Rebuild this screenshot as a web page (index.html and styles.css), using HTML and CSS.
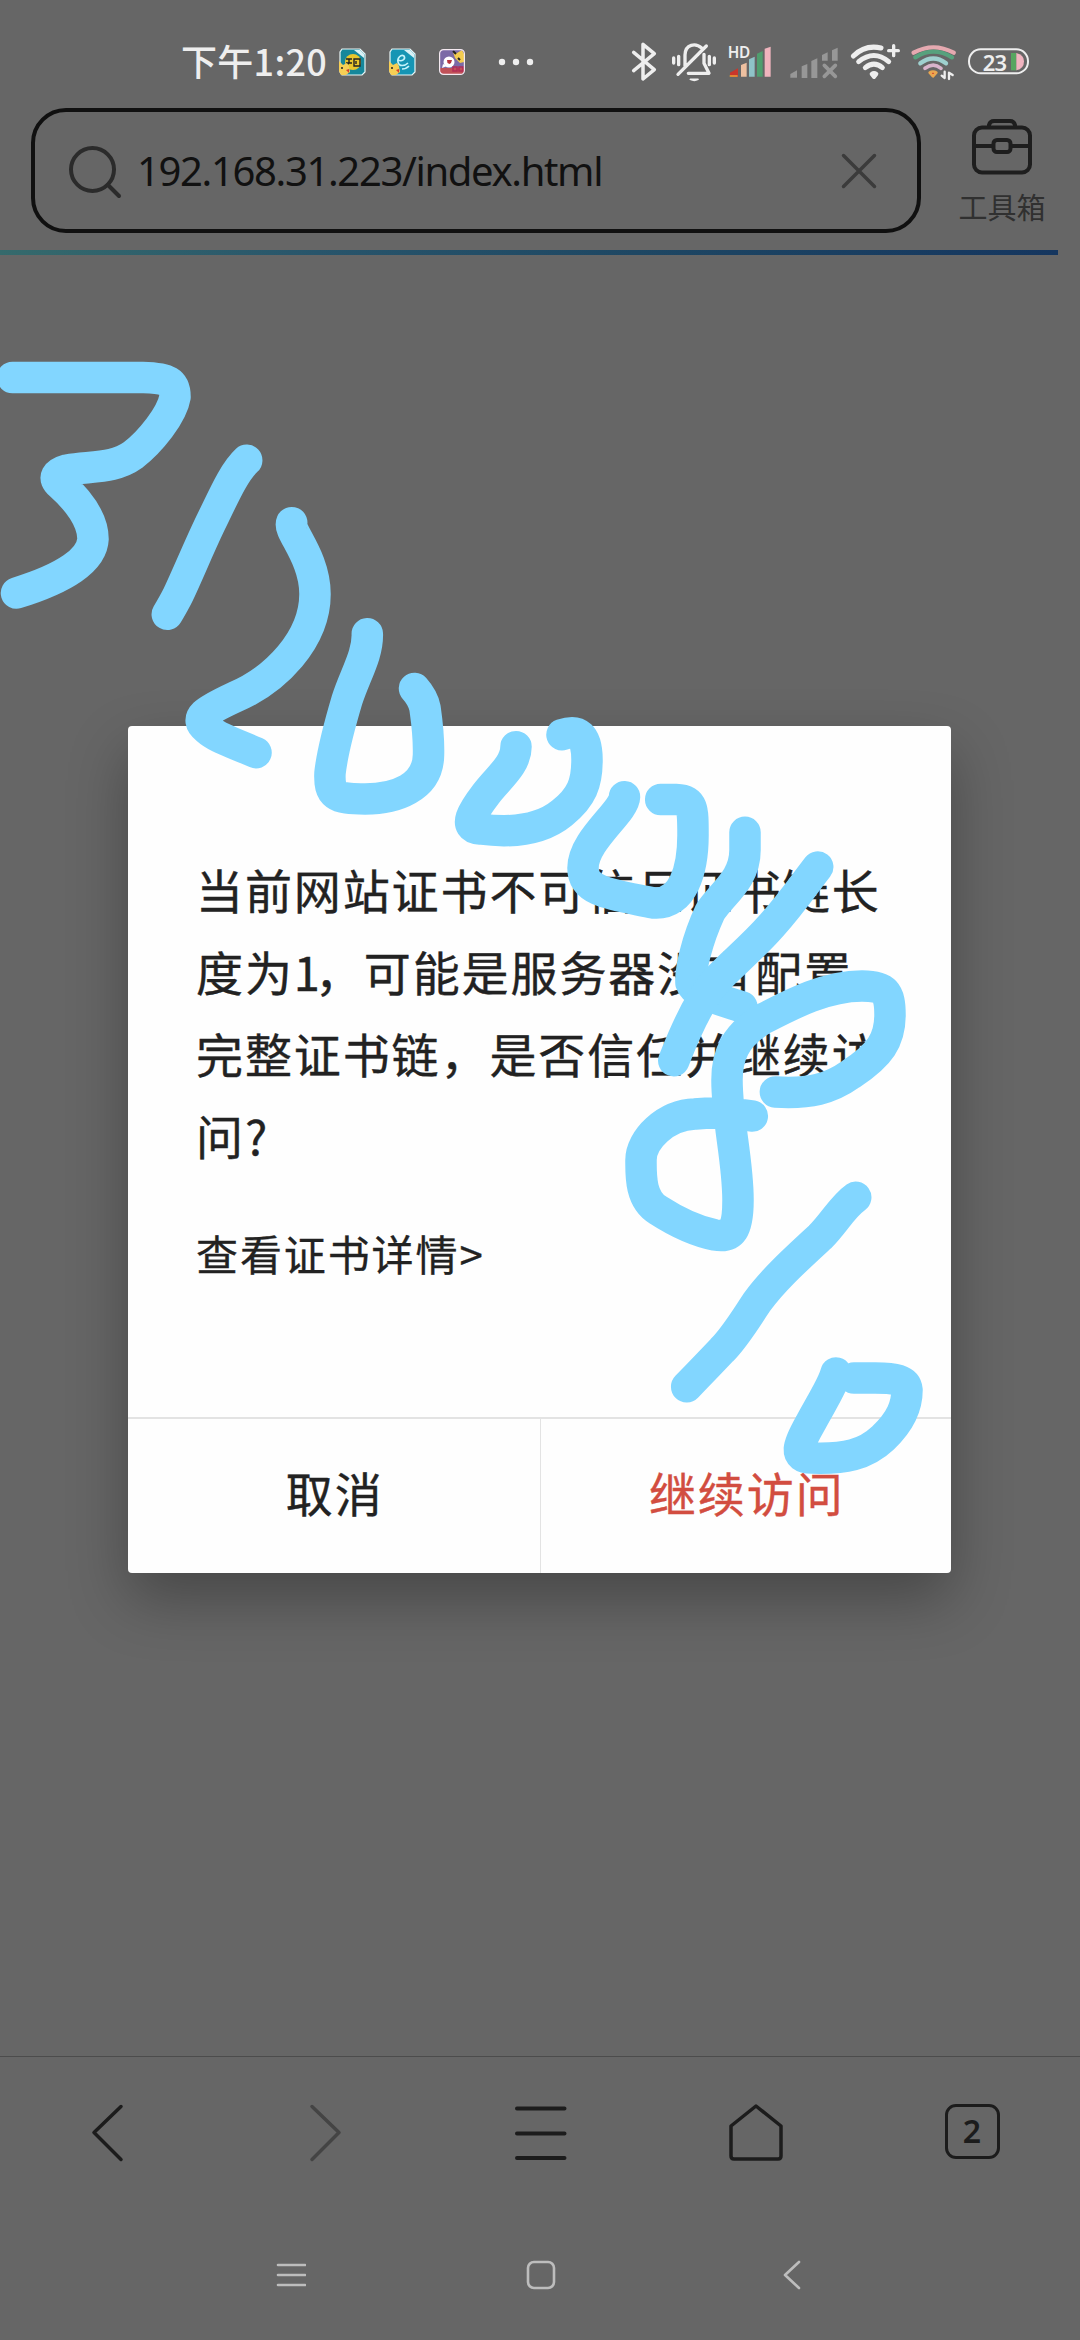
FILE: index.html
```html
<!DOCTYPE html>
<html lang="zh-CN">
<head>
<meta charset="utf-8">
<title>192.168.31.223/index.html</title>
<link rel="stylesheet" href="styles.css">
</head>
<body>
<div class="screen">
  <header class="status">
    <span class="clock">下午1:20</span>
    <div class="apps">
      <svg width="28" height="28" viewBox="0 0 28 28"><path d="M4 1H22L27 6V24L24 27H4L2 24V4Z" fill="#16879b" stroke="#e9f5f5" stroke-width="1.2"/><path d="M16 2H22L26 6V10Z" fill="#d9f1f6"/><circle cx="15" cy="14" r="8" fill="#e9c62c"/><path d="M8 11H14M8 15H14M11 11V15L8 18M16 11H22V18H16ZM18 13V16" stroke="#222" stroke-width="1.4" fill="none"/><path d="M1 13L5 17L9 15L11 18L12 24L8 27H3L1 23Z" fill="#f7cf55"/><path d="M8 22L11 21V25Z" fill="#d8402c"/><circle cx="4" cy="20" r="1" fill="#222"/></svg>
      <svg width="28" height="28" viewBox="0 0 28 28"><path d="M4 1H22L27 6V24L24 27H4L2 24V4Z" fill="#1695b4" stroke="#e9f5f5" stroke-width="1.2"/><path d="M16 2H22L26 6V10Z" fill="#d9f1f6"/><path d="M10 12C14 14 18 11 16 8C13 6 9 10 10 14C11 19 17 18 20 15M14 21Q18 21 21 18" stroke="#c5f4fb" stroke-width="1.6" fill="none"/><path d="M1 13L5 17L9 15L11 18L12 24L8 27H3L1 23Z" fill="#f7cf55"/><path d="M8 22L11 21V25Z" fill="#d8402c"/><circle cx="4" cy="20" r="1" fill="#222"/></svg>
      <svg width="28" height="28" viewBox="0 0 28 28"><rect x="1.6" y="1.6" width="24.8" height="24.8" rx="4" fill="#7b6aa6"/><path d="M2 20H26V24L24 26H4L2 24Z" fill="#c05158"/><circle cx="11" cy="14" r="5.5" fill="#fff"/><path d="M5 16L4 20L9 18Z" fill="#fff"/><path d="M9 12H14L13 15L11.5 16L9.5 15Z" fill="#b7333f"/><path d="M15 4L19 5L24 2L26 6V14L22 15L17 10Z" fill="#f3cc50"/><path d="M15 3L18 6M20 10L22 12" stroke="#222" stroke-width="2"/><path d="M15 19H19V23H15ZM21 19H25V23H21Z" fill="none" stroke="#b32c55" stroke-width="1.5"/><rect x="1.6" y="1.6" width="24.8" height="24.8" rx="4" fill="none" stroke="#f4e9f0" stroke-width="1.2"/></svg>
    </div>
    <svg class="more" width="36" height="8" viewBox="0 0 36 8"><g fill="#eee"><circle cx="4" cy="4" r="3.2"/><circle cx="18" cy="4" r="3.2"/><circle cx="32" cy="4" r="3.2"/></g></svg>
    <svg class="signals" width="400" height="44" viewBox="90 60 1200 132" fill="none" stroke-linecap="round" stroke-linejoin="round">
      <path d="M98 97L160 149L126 177V73L160 101L98 152" stroke="#eee" stroke-width="10.5"/>
      <g stroke="#eee" stroke-width="10"><path d="M252 137V105C253 72 284 68 302 84M231 163L316 78M309 103V130L324 160H262M218 114V129M233 109V134M325 109V134M340 114V129"/><path d="M268 178H291Q280 184 268 178Z" stroke-width="5" fill="#eee"/></g>
      <text class="hd" x="380" y="114" fill="#eee">HD</text>
      <path d="M387 166V158L411 145V171H391Z" fill="#c9362c"/><path d="M388 168H408" stroke="#e8a23a" stroke-width="5"/>
      <path d="M420 135L437 128V170H420Z" fill="#eec0a0"/><path d="M444 118L461 110V170H444Z" fill="#8fc3c8"/><path d="M468 101L485 93V170H468Z" fill="#4f9e6e"/><path d="M491 86L509 80V170H491Z" fill="#efb4bd"/>
      <g fill="#979797"><path d="M568 162L588 151V173H568Z"/><path d="M602 139L619 132V174H602Z"/><path d="M631 123L649 115V174H631Z"/><path d="M663 105L680 97V122H663ZM693 91L710 83V122H693Z"/></g><path d="M670 136L703 169M703 136L670 169" stroke="#979797" stroke-width="11"/>
      <g stroke="#eee" stroke-width="15"><path d="M757 108Q793 73 840 84M773 125Q819 88 863 125M793 143Q819 122 844 143"/><path d="M863 92H892M878 77V107" stroke-width="10"/><path d="M812 162Q819 157 826 162L819 171Z" stroke-width="12" fill="#eee"/></g>
      <g stroke-width="13"><path d="M938 98Q997 66 1058 98" stroke="#e5a9b0"/><path d="M943 112Q997 78 1053 112" stroke="#57a17d"/><path d="M958 130Q997 101 1035 130" stroke="#9fd0cf"/><path d="M972 145Q997 126 1020 145" stroke="#d9b4cc" stroke-width="11"/><path d="M986 158Q996 151 1006 158L996 169Z" stroke="#eba750" stroke-width="8" fill="#cf3b2c"/><path d="M1031 155V174L1022 167M1044 177V158L1055 165" stroke="#eee" stroke-width="7"/></g>
      <path d="M1230 99H1246V151H1230Z" fill="#57a560"/><path d="M1246 99Q1269 104 1269 124Q1269 147 1246 151Z" fill="#f1b4c0"/><rect x="1104" y="88" width="177" height="72" rx="35" stroke="#eee" stroke-width="6"/>
      <text class="charge" x="1145" y="152" fill="#eee">23</text>
    </svg>
  </header>

  <div class="address-row">
    <div class="address">
      <svg width="56" height="56" viewBox="0 0 56 56" fill="none" stroke="#2b2b2b" stroke-width="4" stroke-linecap="round"><circle cx="24.5" cy="26.5" r="21.5"/><path d="M40 42L51 53"/></svg>
      <span class="url">192.168.31.223/index.html</span>
      <svg class="clear" width="36" height="36" viewBox="0 0 36 36" stroke="#3b3b3b" stroke-width="3.5" stroke-linecap="round"><path d="M2.500 2.500L33.500 33.500M33.500 2.500L2.500 33.500"/></svg>
    </div>
    <div class="tools">
      <svg width="62" height="58" viewBox="0 0 62 58" fill="none" stroke="#1e1e1e" stroke-width="4"><rect x="3" y="9.5" width="56" height="45" rx="8"/><path d="M18 9V7Q19 3 23 3H39Q43 3 44 7V9M4 28H22M40 28H58"/><rect x="22.5" y="22" width="17" height="12" rx="3.5"/></svg>
      <span>工具箱</span>
    </div>
  </div>
  <div class="progress"><i></i></div>
  <main class="page"></main>

  <nav class="toolbar">
    <svg width="60" height="60" viewBox="0 0 60 60"><path d="M43 4.500L16 30.500L43 57.500" stroke="#1c1c1c"/></svg>
    <svg width="60" height="60" viewBox="0 0 60 60"><path d="M18 4.500L45 30.500L18 57.500" stroke="#444"/></svg>
    <svg width="60" height="60" viewBox="0 0 60 60"><path d="M7 6.500H54.500M7 31.500H54.500M7 56H54.500" stroke="#1c1c1c" stroke-width="4"/></svg>
    <svg width="60" height="60" viewBox="0 0 60 60"><path d="M30 4L55 24V54Q55 57 52 57H8Q5 57 5 54V24Z" stroke="#1c1c1c"/></svg>
    <span class="tabs">2</span>
  </nav>
  <nav class="system">
    <svg width="30" height="30" viewBox="0 0 30 30"><path d="M2 5H29M2 15H29M2 25H29" stroke="#bdbdbd" stroke-width="2.6"/></svg>
    <svg width="30" height="30" viewBox="0 0 30 30"><rect x="2" y="2" width="26" height="26" rx="6" stroke="#bdbdbd" stroke-width="2.6"/></svg>
    <svg width="30" height="30" viewBox="0 0 30 30"><path d="M23 2L9 15L23 28" stroke="#bdbdbd" stroke-width="2.6"/></svg>
  </nav>

  <div class="overlay">
    <section class="dialog">
      <div class="content">
        <p class="message">当前网站证书不可信且证书链长<br>度为<span class="one">1</span>，可能是服务器没有配置<br>完整证书链，是否信任并继续访<br>问?</p>
        <a class="details">查看证书详情&gt;</a>
      </div>
      <div class="actions"><button>取消</button><button class="confirm">继续访问</button></div>
    </section>
  </div>

  <svg class="scribble" width="1080" height="2340" viewBox="0 0 1080 2340">
    <path d="M12.5 377.5H143C168 378 175 382 175 397C172 415 150 442 133 455C115 468 95 466 67 470C56 473 53 478 60 484C78 500 93 520 93 539C92 560 65 578 16.5 593"/>
    <path d="M246.7 460.3C233 473 222 500 210.5 523C198 549 188 574 178 595Q174 603 167.3 614.3"/>
    <path d="M291.7 522.7C288 531 315 557 315 594C315 640 275 680 235 697C205 711 193 718 207 729C217 738 232 742 256 752.7"/>
    <path d="M367.3 633.7C368 655 355 675 347 700C339 727 332 755 330 773C329 795 335 799 365 799C395 799 428 788 428.5 755C429 735 427 722 425 708Q423 698 414.5 688.5"/>
    <path d="M516 746.7C516 765 498 778 486 794C473 811 462 828 480 829C510 833 540 831 562 813C582 797 587 783 587 760C587 735 578 729 562 734.7"/>
    <path d="M624.5 796.7C624 812 583 840 583 868C583 893 615 895 654 903C683 905 693 870 693 835C693 808 693 800 676 799.5H660.7"/>
    <path d="M745 832.3V850C745 880 722 893 710 912C697 940 690 970 691 983C694 993 715 998 742 1007"/>
    <path d="M817.7 867C800 890 790 905 772 925C750 950 730 965 715 982C695 1005 680 1045 673.8 1060.7"/>
    <path d="M775.4 1092C810 1094 830 1089 851 1074C880 1055 890 1040 890 1015C890 992 885 986 862 986C825 986 790 1005 761 1020C735 1037 727 1055 727 1080C727 1120 738 1160 738 1200C738 1230 732 1238 715 1235C695 1231 675 1221 658 1210C640 1199 641 1175 641 1160C641 1140 665 1115 695 1114C715 1112 735 1113 752.3 1116"/>
    <path d="M855.7 1197.3C842 1207 835 1222 820 1237C795 1260 773 1280 757 1302C745 1320 735 1337 722 1350Q703 1370 686.7 1386.7"/>
    <path d="M836 1373C833 1385 820 1405 810 1424C798 1445 793 1458 812 1458C845 1459 865 1455 883 1438C902 1420 907 1405 907 1390C906 1380 895 1378 875 1378H854"/>
  </svg>
</div>
</body>
</html>
```
FILE: styles.css
```css
* { box-sizing: border-box; }
body { margin: 0; background: #666; font-family: "Noto Sans CJK SC", sans-serif; }
svg { display: block; flex: none; }
.screen { position: relative; width: 1080px; height: 2340px; display: flex; flex-direction: column; overflow: hidden; background: #666; }

.status { height: 108px; flex: none; display: flex; align-items: flex-start; padding: 36px 0 0 181px; }
.clock { width: 157px; font-size: 36px; line-height: 48px; font-weight: 500; color: #eee; letter-spacing: .3px; white-space: nowrap; }
.apps { display: flex; gap: 22px; padding-top: 12px; }
.more { margin: 22px 0 0 32px; }
.signals { margin: 4px 0 0 97px; }
.hd { font: 600 46px "Noto Sans", sans-serif; letter-spacing: -1px; }
.charge { font: 600 66px "Noto Sans", sans-serif; letter-spacing: -2px; }

.address-row { display: flex; height: 142px; flex: none; padding-left: 31px; }
.address { width: 890px; height: 125px; flex: none; border: 4px solid #101010; border-radius: 35px; display: flex; align-items: center; padding: 0 40px 0 33px; }
.address .url { flex: 1; margin-left: 13px; font: 40px/54px "Noto Sans", sans-serif; letter-spacing: -1.35px; color: #111; white-space: nowrap; }
.tools { width: 162px; flex: none; display: flex; flex-direction: column; align-items: center; padding-top: 10px; font-size: 29px; line-height: 40px; color: #303030; }
.tools span { margin-top: 10px; }
.progress { height: 5px; flex: none; }
.progress i { display: block; width: 1058px; height: 5px; background: linear-gradient(90deg, #356a6c, #28556b 30%, #1e4763 60%, #15365f); }
.page { flex: 1; }

.toolbar { height: 152px; flex: none; border-top: 1px solid #4c4c4c; display: grid; grid-template-columns: repeat(5, 1fr); justify-items: center; align-items: center; padding-bottom: 2px; fill: none; stroke-width: 3.5; stroke-linecap: round; stroke-linejoin: round; }
.tabs { width: 55px; height: 55px; border: 3.5px solid #1c1c1c; border-radius: 11px; font: 600 32px/48px "Noto Sans", sans-serif; text-align: center; color: #1c1c1c; }
.system { height: 132px; flex: none; display: flex; justify-content: center; gap: 220px; padding: 52px 0 0 2px; fill: none; stroke-linecap: round; stroke-linejoin: round; }

.overlay { position: absolute; inset: 0; padding: 726px 129px 0 128px; }
.dialog { height: 847px; display: flex; flex-direction: column; background: #fefefe; border-radius: 4px; box-shadow: 0 26px 60px rgba(0, 0, 0, .3); }
.content { flex: 1; padding: 122px 0 0 68px; }
.message { margin: 0; font-size: 47px; line-height: 82px; letter-spacing: 1.9px; color: #222; white-space: nowrap; -webkit-text-stroke: .4px #222; }
.one { letter-spacing: -5px; }
.details { display: block; margin-top: 46px; font-size: 42px; line-height: 62px; letter-spacing: 1.9px; color: #222; -webkit-text-stroke: .3px #222; }
.actions { height: 156px; display: grid; grid-template-columns: 1fr 1fr; border-top: 2px solid #e3e3e3; }
.actions button { border: 0; background: none; font: 47px/66px "Noto Sans CJK SC", sans-serif; letter-spacing: 1.9px; color: #222; padding: 0 0 8px 2px; -webkit-text-stroke: .4px; }
.actions .confirm { color: #d24d40; border-left: 1px solid #e3e3e3; }

.scribble { position: absolute; inset: 0; fill: none; stroke: #82d6ff; stroke-width: 31.5px; stroke-linecap: round; stroke-linejoin: round; }
```
